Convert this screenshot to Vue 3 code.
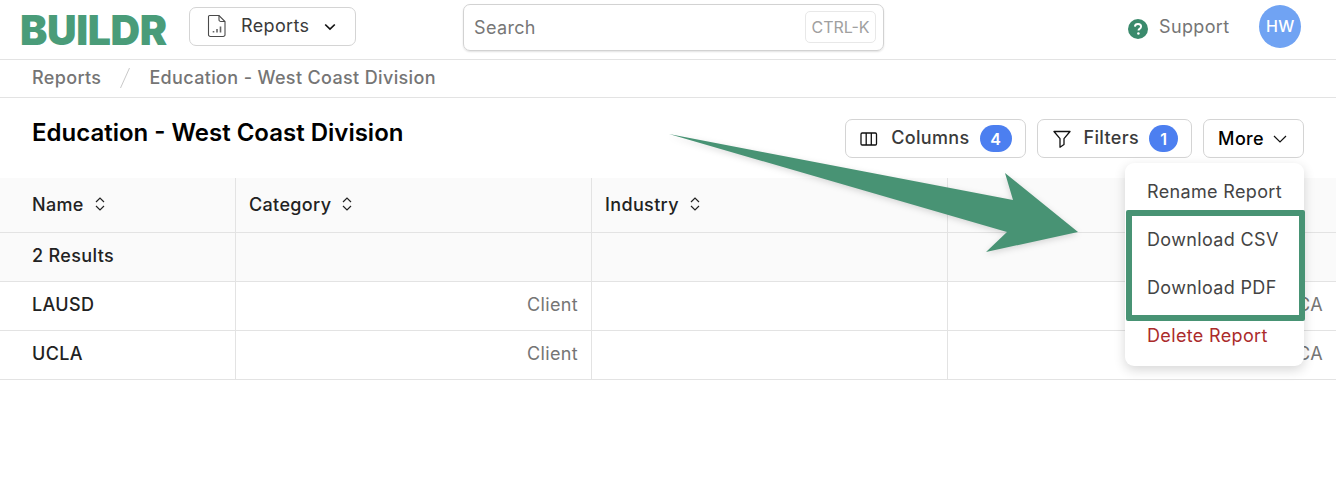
<script setup>
const rows = [
  { name: 'LAUSD', category: 'Client', state: 'CA' },
  { name: 'UCLA', category: 'Client', state: 'CA' }
]
const headers = ['Name', 'Category', 'Industry', 'State']
</script>

<template>
  <div class="page">
    <header class="topbar">
      <div class="logo">BUILDR</div>
      <button class="switcher">
        <svg class="doc" width="20" height="24" viewBox="0 0 20 24" fill="none" stroke="#4a4a4a" stroke-width="1.1">
          <path d="M2.5 1.5h9.5l6 6v13.2a1.8 1.8 0 0 1-1.8 1.8H3.3a1.8 1.8 0 0 1-1.8-1.8V2.5a1 1 0 0 1 1-1z" />
          <path d="M12 1.5v4.2a1.8 1.8 0 0 0 1.8 1.8H18" />
          <path d="M6.5 18.5v-1.5M10 18.5v-3.5M13.5 18.5v-6" stroke-width="1.6" stroke="#666" />
        </svg>
        <span>Reports</span>
        <svg class="caret" width="12" height="8" viewBox="0 0 12 8" fill="none" stroke="#111" stroke-width="1.7">
          <path d="M1.2 1.5 6 6l4.8-4.5" />
        </svg>
      </button>
      <div class="search">
        <span>Search</span>
        <kbd>CTRL-K</kbd>
      </div>
      <div class="support">
        <svg width="20" height="20" viewBox="0 0 20 20">
          <circle cx="10" cy="10" r="10" fill="#3a8a6c" />
          <path d="M6.9 7.6c.1-1.7 1.4-2.6 3.1-2.6 1.8 0 3.1 1 3.1 2.6 0 1.2-.7 1.8-1.5 2.3-.8.5-1.1.8-1.1 1.6" fill="none" stroke="#fff" stroke-width="1.9" />
          <circle cx="10.4" cy="14.6" r="1.25" fill="#fff" />
        </svg>
        <span>Support</span>
      </div>
      <div class="avatar">HW</div>
    </header>

    <nav class="crumbs">
      <span>Reports</span>
      <svg width="12" height="24" viewBox="0 0 12 24" fill="none" stroke="#c9c9c9"><path d="M10.5 2 1.5 22" /></svg>
      <span>Education - West Coast Division</span>
    </nav>

    <section class="titlebar">
      <h1>Education - West Coast Division</h1>
      <div class="actions">
        <button class="btn columns">
          <svg width="18" height="14" viewBox="0 0 18 14" fill="none" stroke="#111" stroke-width="1.3">
            <rect x="1" y="1" width="15.5" height="12" rx="1.2" />
            <path d="M6.2 1v12M11.3 1v12" />
          </svg>
          <span class="label">Columns</span>
          <span class="pill wide">4</span>
        </button>
        <button class="btn">
          <svg width="18" height="18" viewBox="0 0 18 18" fill="none" stroke="#111" stroke-width="1.3" stroke-linejoin="round">
            <path d="M1 1.5h16l-6 7.2v5.8l-4 2.7V8.7z" />
          </svg>
          <span class="label">Filters</span>
          <span class="pill">1</span>
        </button>
        <button class="btn more">
          <span>More</span>
          <svg width="14" height="8" viewBox="0 0 14 8" fill="none" stroke="#111" stroke-width="1.2">
            <path d="M1 1l6 6 6-6" />
          </svg>
        </button>
      </div>
    </section>

    <section class="table">
      <div class="cell head" v-for="h in headers" :key="h">
        <span>{{ h }}</span>
        <svg width="10" height="16" viewBox="0 0 10 16" fill="none" stroke="#222" stroke-width="1.2">
          <path d="M1 6l4-4 4 4M1 10l4 4 4-4" />
        </svg>
      </div>
      <div class="cell sum">2 Results</div>
      <div class="cell sum"></div>
      <div class="cell sum"></div>
      <div class="cell sum"></div>
      <template v-for="r in rows" :key="r.name">
        <div class="cell name">{{ r.name }}</div>
        <div class="cell val">{{ r.category }}</div>
        <div class="cell val"></div>
        <div class="cell val">{{ r.state }}</div>
      </template>
    </section>

    <div class="menu">
      <div class="item">Rename Report</div>
      <div class="item">Download CSV</div>
      <div class="item">Download PDF</div>
      <div class="item danger">Delete Report</div>
    </div>
    <div class="highlight"></div>
    <svg class="arrow" width="1336" height="484" viewBox="0 0 1336 484">
      <polygon points="669,134 1013,200 1005,173 1078,232 986,252 1007,232" fill="#489374" />
    </svg>
  </div>
</template>

<style>
html, body { background: #fff; }
</style>

<style scoped>
.page {
  position: relative;
  width: 1336px;
  height: 484px;
  overflow: hidden;
  background: #fff;
  font-family: Inter, "Liberation Sans", sans-serif;
  font-size: 18px;
  letter-spacing: 0.35px;
  color: #111;
}
button { font-family: inherit; background: #fff; padding: 0; margin: 0; letter-spacing: inherit; }

.topbar {
  height: 59px;
  border-bottom: 1px solid #e3e3e3;
  display: flex;
  align-items: center;
  box-sizing: content-box;
}
.logo {
  margin-left: 20px;
  width: 149px;
  font-size: 41px;
  font-weight: 900;
  letter-spacing: -0.4px;
  color: #4a9c79;
  line-height: 1;
  position: relative;
  top: 1px;
}
.switcher {
  margin-left: 20px;
  margin-top: -7px;
  width: 167px;
  height: 39px;
  box-sizing: border-box;
  border: 1px solid #d4d4d4;
  border-radius: 7px;
  display: flex;
  align-items: center;
  font-size: 18px;
  color: #3a3a3a;
}
.doc { margin-left: 17px; }
.switcher span { margin-left: 14px; margin-top: -1px; }
.caret { margin-left: 15px; margin-top: 2px; }
.search {
  margin-left: 107px;
  margin-top: -5px;
  width: 421px;
  height: 47px;
  box-sizing: border-box;
  border: 1px solid #d2d2d2;
  border-radius: 7px;
  box-shadow: 0 1px 2px rgba(0, 0, 0, 0.12);
  display: flex;
  align-items: center;
  justify-content: space-between;
  padding: 0 7px 0 10px;
  color: #777;
  font-size: 18px;
}
kbd {
  font-family: inherit;
  font-size: 16px;
  letter-spacing: 0;
  color: #a0a0a0;
  border: 1px solid #e8e8e8;
  border-radius: 5px;
  height: 32px;
  width: 71px;
  box-sizing: border-box;
  display: flex;
  align-items: center;
  justify-content: center;
}
.support {
  margin-left: 244px;
  display: flex;
  align-items: center;
  gap: 11px;
  color: #757575;
  font-size: 18px;
  margin-top: -7px;
}
.support svg { margin-top: 5px; }
.avatar {
  margin-left: 30px;
  margin-top: -7px;
  width: 42px;
  height: 43px;
  border-radius: 50%;
  background: #70a3f3;
  color: #fff;
  font-size: 16px;
  font-weight: 500;
  display: flex;
  align-items: center;
  justify-content: center;
}

.crumbs {
  border-bottom: 1px solid #e3e3e3;
  display: flex;
  align-items: center;
  padding-left: 32px;
  padding-bottom: 2px;
  box-sizing: content-box;
  height: 35px;
  gap: 18px;
  color: #757575;
  font-weight: 500;
}

.titlebar {
  height: 80px;
  display: flex;
  justify-content: space-between;
  padding: 21px 32px 0;
  box-sizing: border-box;
}
h1 {
  margin: 0;
  font-size: 24px;
  font-weight: 600;
  letter-spacing: 0;
  color: #000;
  line-height: 28px;
}
.actions { display: flex; gap: 11px; }
.btn {
  height: 39px;
  box-sizing: border-box;
  border: 1px solid #d4d4d4;
  border-radius: 7px;
  display: flex;
  align-items: center;
  padding: 0 13px 0 15px;
  font-size: 18px;
  font-weight: 500;
  color: #3a3a3a;
}
.columns { padding-left: 14px; }
.btn span:first-child { margin-top: -1px; }
.label { margin-left: 13px; margin-top: -2px; }
.pill {
  margin-left: 10px;
  height: 27px;
  width: 29px;
  border-radius: 14px;
  background: #4c7ff0;
  color: #fff;
  font-size: 16px;
  font-weight: 600;
  letter-spacing: 0;
  display: flex;
  align-items: center;
  justify-content: center;
}
.pill.wide { width: 32px; }
.more { color: #000; gap: 9px; padding: 0 16px 0 14px; }

.table {
  display: grid;
  grid-template-columns: 236px 356px 356px 1fr;
}
.cell {
  border-right: 1px solid #e3e3e3;
  border-bottom: 1px solid #e3e3e3;
  box-sizing: border-box;
  display: flex;
  align-items: center;
  height: 49px;
  padding: 0 13px 4px;
  font-weight: 500;
}
.cell:nth-child(4n) { border-right: none; }
.cell:nth-child(4n+1) { padding-left: 32px; }
.head {
  height: 55px;
  background: #fafafa;
  gap: 11px;
  color: #222;
  padding-bottom: 2px;
}
.sum { background: #fafafa; color: #222; }
.name { color: #222; }
.val { justify-content: flex-end; color: #757575; font-weight: 400; }

.menu {
  position: absolute;
  left: 1125px;
  top: 163px;
  width: 179px;
  height: 203px;
  padding-top: 4px;
  box-sizing: border-box;
  background: #fff;
  border-radius: 9px;
  box-shadow: 0 4px 12px rgba(0, 0, 0, 0.16);
  color: #444;
}
.item {
  height: 48px;
  display: flex;
  align-items: center;
  padding-left: 22px;
}
.danger { color: #ab2b2b; }
.highlight {
  position: absolute;
  left: 1126px;
  top: 210px;
  width: 179px;
  height: 111px;
  box-sizing: border-box;
  border: 6px solid #489374;
  border-radius: 2px;
}
.arrow {
  position: absolute;
  left: 0;
  top: 0;
  pointer-events: none;
  filter: drop-shadow(0 2px 3px rgba(0, 0, 0, 0.15));
}
</style>
